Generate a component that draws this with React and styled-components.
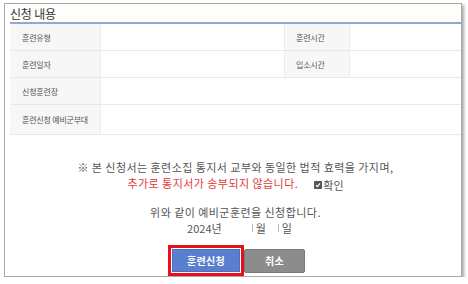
import React from "react";
import styled, { createGlobalStyle } from "styled-components";

const Global = createGlobalStyle`
  html, body { margin: 0; padding: 0; background: #fff; }
  body { font-family: "Noto Sans CJK KR", "Noto Sans", sans-serif; }
`;

const Panel = styled.div`
  margin: 3px 0 0 4px;
  width: 458px;
  height: 274px;
  box-sizing: border-box;
  border: 1px solid #a9a9a9;
  box-shadow: 2px 2px 3px rgba(0, 0, 0, 0.35);
  background: #fff;
  overflow: hidden;
  display: flex;
  flex-direction: column;
  padding-left: 5px;
`;

const Header = styled.div`
  height: 28px;
  display: flex;
  align-items: center;
  font-size: 12px;
  color: #333;
  background: #fdfdfa;
  border-bottom: 2px solid #8ea8d4;
  letter-spacing: -0.2px;
`;

const Table = styled.div`
  display: grid;
  grid-template-columns: 91px 183px 66px 1fr;
  font-size: 8px;
  color: #555;
`;

const Label = styled.div`
  height: ${(p) => p.$h || 27}px;
  box-sizing: border-box;
  background: #f7f7f7;
  border-bottom: 1px solid #e8e8e8;
  border-right: 1px solid #ececec;
  border-left: ${(p) => (p.$inner ? "1px solid #ececec" : "none")};
  display: flex;
  align-items: center;
  padding-left: ${(p) => (p.$inner ? 11 : 12)}px;
  letter-spacing: -0.2px;
`;

const Value = styled.div`
  height: ${(p) => p.$h || 27}px;
  box-sizing: border-box;
  border-bottom: 1px solid #e8e8e8;
  grid-column: ${(p) => p.$span || "auto"};
`;

const Notice = styled.div`
  display: flex;
  flex-direction: column;
  align-items: center;
  margin-top: 24px;
  font-size: 11px;
  line-height: 16px;
  color: #555;
  letter-spacing: 0.45px;
`;

const Red = styled.span`
  color: #e53935;
`;

const Check = styled.span`
  display: inline-flex;
  align-items: center;
  margin-left: 16px;
  color: #555;
  gap: 1px;
  letter-spacing: 0;
`;

const Box = styled.span`
  display: inline-flex;
  width: 8px;
  height: 8px;
  background: #555;
  border-radius: 1px;
  align-items: center;
  justify-content: center;
`;

const Gap = styled.div`
  height: 11px;
`;

const DateLine = styled.div`
  display: flex;
  align-items: center;
  padding-left: 8px;
  letter-spacing: 0;
`;

const Blank = styled.span`
  display: inline-flex;
  align-items: center;
  margin-left: ${(p) => p.$ml}px;
  &::before {
    content: "";
    display: inline-block;
    width: 1px;
    height: 8px;
    background: #bbb;
    margin-right: 3px;
  }
`;

const Buttons = styled.div`
  display: flex;
  justify-content: center;
  align-items: center;
  margin-top: 9px;
  padding-left: 2px;
`;

const Highlight = styled.div`
  border: 3px solid #e5121b;
  padding: 1px;
  display: flex;
`;

const Btn = styled.button`
  font-family: "Noto Sans CJK KR", sans-serif;
  font-size: 10px;
  font-weight: 700;
  color: #fff;
  border: 1px solid ${(p) => (p.$gray ? "#7a7a7a" : "#4e6fbd")};
  background: ${(p) => (p.$gray ? "#8c8c8c" : "#5b7fcf")};
  width: ${(p) => p.$w}px;
  height: ${(p) => p.$h}px;
  padding: 0;
  border-radius: ${(p) => (p.$gray ? "2px" : "0")};
  letter-spacing: 0.3px;
  cursor: pointer;
`;

export default function App() {
  return (
    <>
      <Global />
      <Panel>
        <Header>신청 내용</Header>
        <Table>
          <Label>훈련유형</Label>
          <Value />
          <Label $inner>훈련시간</Label>
          <Value />
          <Label>훈련일자</Label>
          <Value />
          <Label $inner>입소시간</Label>
          <Value />
          <Label>신청훈련장</Label>
          <Value $span="span 3" />
          <Label $h={30}>훈련신청 예비군부대</Label>
          <Value $span="span 3" $h={30} />
        </Table>
        <Notice>
          <div>※ 본 신청서는 훈련소집 통지서 교부와 동일한 법적 효력을 가지며,</div>
          <div>
            <Red>추가로 통지서가 송부되지 않습니다.</Red>
            <Check>
              <Box>
                <svg width="6" height="6" viewBox="0 0 6 6">
                  <path d="M1 3.2 L2.5 4.6 L5 1.4" stroke="#fff" strokeWidth="1.2" fill="none" />
                </svg>
              </Box>
              확인
            </Check>
          </div>
          <Gap />
          <div>위와 같이 예비군훈련을 신청합니다.</div>
          <DateLine>
            2024년
            <Blank $ml={30}>월</Blank>
            <Blank $ml={12}>일</Blank>
          </DateLine>
        </Notice>
        <Buttons>
          <Highlight>
            <Btn $w={68} $h={23}>훈련신청</Btn>
          </Highlight>
          <Btn $gray $w={61} $h={24}>취소</Btn>
        </Buttons>
      </Panel>
    </>
  );
}
